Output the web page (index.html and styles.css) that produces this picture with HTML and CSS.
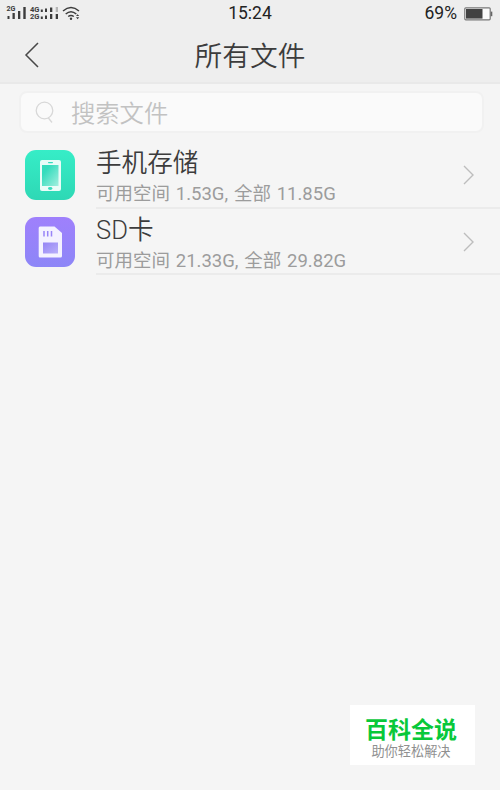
FILE: index.html
```
<!DOCTYPE html>
<html lang="zh-CN">

<head>
    <meta charset="UTF-8">
    <meta name="viewport" content="width=device-width, initial-scale=1.0">
    <title>所有文件</title>
    <link rel="stylesheet" href="styles.css">
</head>

<body>
    <header class="top">
        <div class="status-bar">
            <div class="signals">
                <svg class="signal-icons" width="76" height="20" viewBox="0 0 76 20">
                    <g class="net-label">
                        <text x="0.5" y="8" textLength="9" lengthAdjust="spacingAndGlyphs">2G</text>
                        <text x="24" y="9" textLength="9.5" lengthAdjust="spacingAndGlyphs">4G</text>
                        <text x="24" y="16.3" textLength="9.5" lengthAdjust="spacingAndGlyphs">2G</text>
                    </g>
                    <g fill="#3c3c3c">
                        <rect x="1.5" y="13" width="2" height="3" />
                        <rect x="6.5" y="10" width="2.3" height="6" />
                        <rect x="12" y="8" width="2.3" height="8" />
                        <rect x="17.3" y="4" width="2.4" height="12" />
                        <rect x="34.8" y="6.5" width="2" height="2.5" />
                        <rect x="39" y="5.5" width="2" height="3.5" />
                        <rect x="44" y="4.5" width="2.3" height="4.5" />
                        <rect x="34.8" y="13.5" width="2" height="2.5" />
                        <rect x="39" y="12.5" width="2" height="3.5" />
                        <rect x="44" y="11" width="2.3" height="5" />
                        <rect x="49.7" y="11" width="2.3" height="5" />
                    </g>
                    <rect x="49.7" y="4" width="2.3" height="5" fill="#b5b5b5" />
                    <g fill="none" stroke="#3c3c3c" stroke-width="1.5">
                        <path d="M57 8Q65 1 73 8" />
                        <path d="M59.7 11Q65 6.4 70.3 11" />
                        <path d="M62.2 13.5Q65 11.4 67.8 13.5" />
                    </g>
                    <circle cx="65" cy="15.8" r="1.2" fill="#3c3c3c" />
                    <path d="M70 13l1.6-1.8 1.6 1.8zM70 14.2h3.2l-1.6 2z" fill="#3c3c3c" />
                </svg>
            </div>
            <span class="time">15:24</span>
            <div class="battery">
                <span>69%</span>
                <svg width="29" height="14" viewBox="0 0 29 14">
                    <rect x=".8" y=".8" width="25.4" height="12" rx="1" fill="#fafafa" stroke="#777" stroke-width="1.2" />
                    <rect x="2" y="2" width="16.5" height="9.6" fill="#424242" />
                    <rect x="26.7" y="4.6" width="1.6" height="4.6" fill="#666" />
                </svg>
            </div>
        </div>
        <nav class="navbar">
            <a href="#" class="back">
                <svg width="16" height="26" viewBox="0 0 16 26">
                    <path d="M14 1L2 13L14 25" fill="none" stroke="#484848" stroke-width="1.5" />
                </svg>
            </a>
            <h1 class="title">所有文件</h1>
        </nav>
    </header>

    <div class="search-box">
        <svg width="20" height="24" viewBox="0 0 20 24">
            <circle cx="9.5" cy="10.5" r="8.3" fill="none" stroke="#d8d8d8" stroke-width="1.3" />
            <path d="M13 17.5L17 22.5" stroke="#d8d8d8" stroke-width="1.3" />
        </svg>
        <span class="placeholder">搜索文件</span>
    </div>

    <ul class="storage-list">
        <li class="storage-item">
            <svg class="storage-icon" width="50" height="50" viewBox="0 0 50 50">
                <defs>
                    <linearGradient id="green" x1="0" y1="0" x2="0" y2="1">
                        <stop offset="0" stop-color="#36edc7" />
                        <stop offset="1" stop-color="#2ed8b5" />
                    </linearGradient>
                    <linearGradient id="screen" x1="0" y1="0" x2="1" y2="1">
                        <stop offset=".25" stop-color="#35dcbd" />
                        <stop offset="1" stop-color="#a2efdf" />
                    </linearGradient>
                </defs>
                <rect width="50" height="50" rx="11" fill="url(#green)" />
                <rect x="15" y="10" width="21" height="31" rx="2" fill="#eafcf8" />
                <rect x="17" y="15" width="16.5" height="21" fill="url(#screen)" />
                <rect x="23" y="12" width="5" height="1.2" rx=".6" fill="#35dcbd" />
                <ellipse cx="25.2" cy="38.5" rx="2.2" ry="1.4" fill="#35dcbd" />
            </svg>
            <div class="storage-body">
                <div class="storage-text">
                    <h2>手机存储</h2>
                    <p>可用空间 1.53G, 全部 11.85G</p>
                </div>
                <svg class="arrow" width="12" height="20" viewBox="0 0 12 20">
                    <path d="M1 1L10 10L1 19" fill="none" stroke="#bdbdbd" stroke-width="1.4" />
                </svg>
            </div>
        </li>
        <li class="storage-item">
            <svg class="storage-icon" width="50" height="50" viewBox="0 0 50 50">
                <defs>
                    <linearGradient id="purple" x1="0" y1="0" x2="0" y2="1">
                        <stop offset="0" stop-color="#9f80fc" />
                        <stop offset="1" stop-color="#8d86f7" />
                    </linearGradient>
                    <linearGradient id="label" x1="0" y1="0" x2="1" y2="1">
                        <stop offset="0" stop-color="#9584f5" />
                        <stop offset="1" stop-color="#b9b0fa" />
                    </linearGradient>
                </defs>
                <rect width="50" height="50" rx="11" fill="url(#purple)" />
                <path d="M15 9.5H29.5L37 16V39Q37 40.5 35.5 40.5H15Q13.7 40.5 13.7 39V11Q13.7 9.5 15 9.5Z" fill="#f4f2ff" />
                <path d="M19 14V19.5M22.7 14V19.5M26.5 14V19.5" stroke="#9884f8" stroke-width="1.5" />
                <rect x="18" y="25.5" width="15" height="11" fill="url(#label)" />
            </svg>
            <div class="storage-body">
                <div class="storage-text">
                    <h2>SD卡</h2>
                    <p>可用空间 21.33G, 全部 29.82G</p>
                </div>
                <svg class="arrow" width="12" height="20" viewBox="0 0 12 20">
                    <path d="M1 1L10 10L1 19" fill="none" stroke="#bdbdbd" stroke-width="1.4" />
                </svg>
            </div>
        </li>
    </ul>

    <div class="badge">
        <strong>百科全说</strong>
        <span>助你轻松解决</span>
    </div>
</body>

</html>
```
FILE: styles.css
```
* {
    margin: 0;
    padding: 0;
    box-sizing: border-box;
}

body {
    position: relative;
    height: 790px;
    overflow: hidden;
    font-family: Roboto, "Noto Sans CJK SC", sans-serif;
    background: #f5f5f5;
    color: #3c3c3c;
}

svg {
    display: block;
    flex-shrink: 0;
}

/* Status bar and title */
.top {
    height: 84px;
    background: #eee;
    border-bottom: 2px solid #e9e9e9;
}

.status-bar {
    display: grid;
    grid-template-columns: 1fr auto 1fr;
    align-items: center;
    height: 27px;
    padding: 0 7px 0 6px;
    font-size: 17.5px;
    line-height: 27px;
    color: #222;
}

.time {
    padding-left: 1px;
}

.signals {
    padding-bottom: 1px;
}

.net-label {
    font-size: 7px;
    font-weight: bold;
    line-height: 1;
    fill: #3c3c3c;
}

.battery {
    display: flex;
    justify-content: flex-end;
    align-items: center;
    gap: 7px;
}

.navbar {
    display: grid;
    grid-template-columns: 60px 1fr 60px;
    align-items: center;
    height: 55px;
}

.back {
    padding-left: 24px;
}

.title {
    padding-top: 4px;
    font-size: 27.7px;
    font-weight: 350;
    line-height: 51px;
    text-align: center;
}

/* Search */
.search-box {
    display: flex;
    align-items: center;
    gap: 16px;
    height: 42px;
    margin: 7px 16px 0 19px;
    padding-left: 14px;
    background: #fafafa;
    border: 2px solid #f1f1f1;
    border-radius: 8px;
}

.placeholder {
    padding-top: 3px;
    font-size: 24.3px;
    font-weight: 350;
    line-height: 35px;
    color: #c2c2c2;
}

/* Storage list */
.storage-list {
    margin-top: 9px;
    list-style: none;
}

.storage-item {
    display: flex;
    align-items: center;
    gap: 21px;
    height: 66.5px;
    padding-left: 25px;
}

.storage-body {
    display: flex;
    flex: 1;
    justify-content: space-between;
    align-items: center;
    height: 100%;
    padding: 2px 25px 0 0;
    border-bottom: 2px solid #ebebeb;
}

.storage-text {
    padding-top: 6px;
}

.storage-text h2 {
    font-size: 25.6px;
    font-weight: 350;
    line-height: 33px;
}

.storage-text p {
    font-size: 18.5px;
    font-weight: 400;
    line-height: 29px;
    word-spacing: 1.2px;
    color: #9c9c9c;
}

/* Corner badge */
.badge {
    position: absolute;
    top: 705px;
    left: 350px;
    display: flex;
    flex-direction: column;
    align-items: center;
    width: 125px;
    height: 60px;
    padding: 11px 3px 0 0;
    background: #fff;
}

.badge strong {
    font-size: 23px;
    font-weight: 700;
    line-height: 29px;
    color: #08c83a;
}

.badge span {
    font-size: 13.2px;
    line-height: 14px;
    color: #909090;
}
```
